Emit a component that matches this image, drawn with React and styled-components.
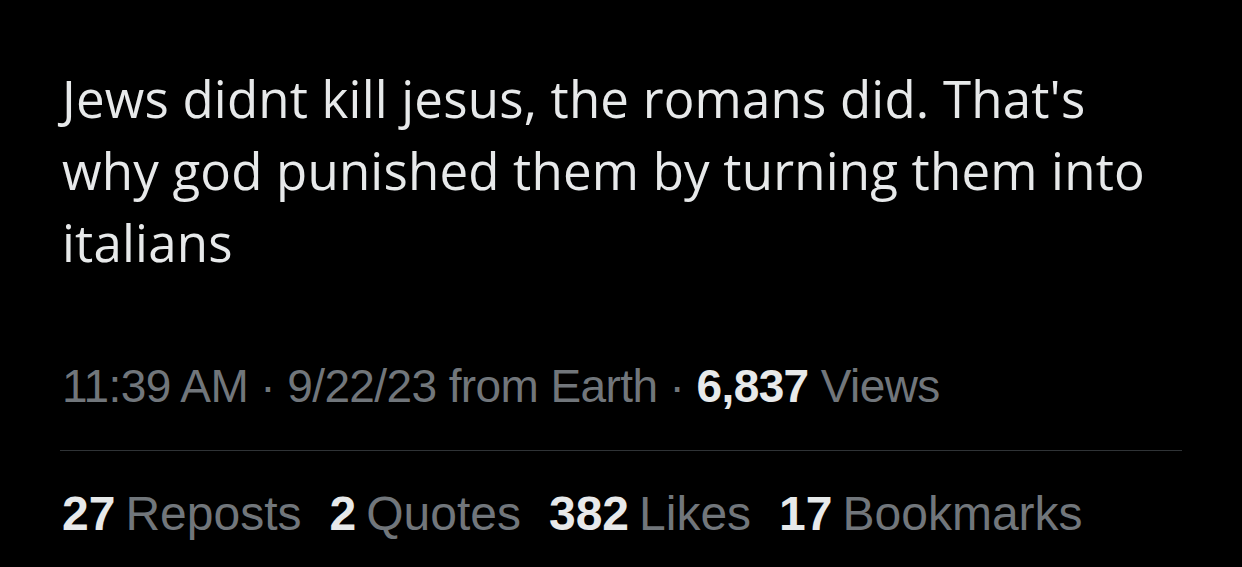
import React from 'react';
import styled, { createGlobalStyle } from 'styled-components';

const GlobalStyle = createGlobalStyle`
  html, body {
    margin: 0;
    padding: 0;
    background: #000;
  }
  body {
    width: 1242px;
    height: 567px;
    overflow: hidden;
  }
`;

const TweetWrapper = styled.div`
  width: 1242px;
  height: 567px;
  box-sizing: border-box;
  padding: 62px 60px 0 60px;
  background-color: #000;
  display: flex;
  flex-direction: column;
`;

const TweetText = styled.p`
  margin: 0 0 0 2px;
  font-family: 'Open Sans', 'Noto Sans', sans-serif;
  font-size: 51px;
  line-height: 72px;
  letter-spacing: 0.2px;
  color: #e7e9ea;
  max-width: 1125px;
`;

const MetaLine = styled.div`
  margin: 83px 0 0 2px;
  font-family: 'Liberation Sans', Arial, sans-serif;
  font-size: 46px;
  line-height: 50px;
  letter-spacing: -0.6px;
  color: #71767b;
  white-space: nowrap;
`;

const Strong = styled.span`
  color: #e7e9ea;
  font-weight: 700;
`;

const Count = styled(Strong)`
  margin-right: 10px;
`;

const Divider = styled.div`
  height: 1px;
  width: 1122px;
  margin-top: 39px;
  background-color: #2f3336;
`;

const StatsRow = styled.div`
  display: flex;
  gap: 28px;
  margin: 38px 0 0 2px;
  font-family: 'Liberation Sans', Arial, sans-serif;
  font-size: 48px;
  line-height: 50px;
  color: #71767b;
  white-space: nowrap;
`;

const Stat = styled.span``;

const stats = [
  { count: '27', label: 'Reposts' },
  { count: '2', label: 'Quotes' },
  { count: '382', label: 'Likes' },
  { count: '17', label: 'Bookmarks' },
];

const App = () => (
  <>
    <GlobalStyle />
    <TweetWrapper>
      <TweetText>
        Jews didnt kill jesus, the romans did. That's why god punished them by turning them into italians
      </TweetText>
      <MetaLine>
        11:39 AM · 9/22/23 from Earth · <Strong>6,837</Strong> Views
      </MetaLine>
      <Divider />
      <StatsRow>
        {stats.map((s) => (
          <Stat key={s.label}>
            <Count>{s.count}</Count>
            {s.label}
          </Stat>
        ))}
      </StatsRow>
    </TweetWrapper>
  </>
);

export default App;
